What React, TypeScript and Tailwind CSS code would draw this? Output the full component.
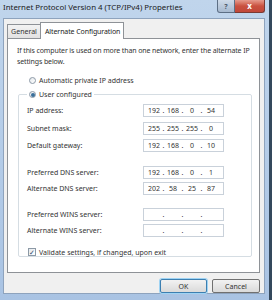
import React from 'react';

const font = { fontFamily: '"Noto Sans", "Open Sans", sans-serif' };

function IpBox({ value }: { value: string[] }) {
  return (
    <div className="w-[81px] h-[13px] border border-[#c9d1da] bg-white flex items-center pl-[2px] text-[7px] text-[#333]">
      {[0, 1, 2, 3].map(i => (
        <React.Fragment key={i}>
          <span className="w-[16px] text-center leading-none">{value[i] ?? ''}</span>
          {i < 3 && <span className="w-[3px] text-center leading-none">.</span>}
        </React.Fragment>
      ))}
    </div>
  );
}

function Row({ label, value, className = '' }: { label: string; value: string[]; className?: string }) {
  return (
    <div className={`flex items-center h-[13px] ${className}`}>
      <span className="w-[124px] pl-[8px] text-[7px] text-[#333] leading-none">{label}</span>
      <IpBox value={value} />
    </div>
  );
}

function Radio({ checked }: { checked?: boolean }) {
  return (
    <span className="w-[7px] h-[7px] rounded-full border border-[#8c99a6] bg-gradient-to-br from-[#e4e8ec] to-white flex items-center justify-center">
      {checked && <span className="w-[4px] h-[4px] rounded-full bg-[#3a6f9a]" />}
    </span>
  );
}

export default function App() {
  return (
    <div className="w-[272px] h-[300px] bg-[#34485c] overflow-hidden" style={font}>
      <div className="w-[269px] h-[300px] flex flex-col bg-gradient-to-b from-[#c0d5ec] via-[#b4cce8] to-[#a9c3e3]">
        {/* Title bar */}
        <div className="h-[18px] flex items-start">
          <span className="pl-[3px] pt-[4px] text-[7.9px] text-[#1a1a1a] leading-none">
            Internet Protocol Version 4 (TCP/IPv4) Properties
          </span>
          <div className="ml-auto mr-[4px] flex">
            <div className="w-[18px] h-[13px] rounded-bl-[3px] border border-t-0 border-[#5d6f85] bg-gradient-to-b from-[#cfdbe9] to-[#a7b9cf] flex items-center justify-center text-[7px] font-bold text-[#4a5868] leading-none">?</div>
            <div className="w-[30px] h-[13px] rounded-br-[3px] border border-t-0 border-l-0 border-[#7a3a33] bg-gradient-to-b from-[#e59a8d] via-[#c9503f] to-[#c1483a] flex items-center justify-center text-[8px] font-bold text-white leading-none">x</div>
          </div>
        </div>

        {/* Body */}
        <div className="ml-[3px] mr-[4px] mb-[6px] flex-1 bg-[#f0f0f0] border border-[#8ea3bd] flex flex-col pl-[3px] pt-[2px]">
          {/* Tabs */}
          <div className="flex items-end h-[17px]">
            <div className="h-[14px] w-[34px] border border-b-0 border-[#8e9297] bg-gradient-to-b from-[#f3f3f3] to-[#e2e2e2] flex items-center justify-center text-[7px] text-[#333] leading-none">General</div>
            <div className="h-[17px] w-[84px] -ml-[1px] border border-b-0 border-[#8e9297] bg-white flex items-center pl-[4px] text-[7px] text-[#222] leading-none whitespace-nowrap tracking-[-0.1px] relative -mb-[1px] z-10">Alternate Configuration</div>
          </div>

          {/* Panel */}
          <div className="w-[253px] h-[235px] bg-white border border-[#8e9297] flex flex-col">
            <p className="pl-[9px] pt-[6px] pr-0 text-[7px] leading-[11px] text-[#333] tracking-[-0.12px]">
              If this computer is used on more than one network, enter the alternate IP settings below.
            </p>
            <div className="flex items-center gap-[3px] pl-[21px] mt-[10px] text-[7px] text-[#333] leading-none">
              <Radio />
              <span>Automatic private IP address</span>
            </div>

            <fieldset className="ml-[10px] w-[234px] h-[166px] mt-[7px] border border-[#d5dde3] rounded-[2px] px-0 pt-[6px]">
              <legend className="ml-[8px] px-[2px] flex items-center gap-[3px] text-[7px] text-[#333] leading-none">
                <Radio checked />
                <span>User configured</span>
              </legend>
              <Row label="IP address:" value={['192', '168', '0', '54']} />
              <Row label="Subnet mask:" value={['255', '255', '255', '0']} className="mt-[5px]" />
              <Row label="Default gateway:" value={['192', '168', '0', '10']} className="mt-[4px]" />
              <Row label="Preferred DNS server:" value={['192', '168', '0', '1']} className="mt-[14px]" />
              <Row label="Alternate DNS server:" value={['202', '58', '25', '87']} className="mt-[3px]" />
              <Row label="Preferred WINS server:" value={[]} className="mt-[13px]" />
              <Row label="Alternate WINS server:" value={[]} className="mt-[3px]" />
              <div className="flex items-center gap-[3px] pl-[9px] mt-[11px] text-[7px] text-[#333] leading-none">
                <span className="w-[8px] h-[8px] border border-[#8c99a6] bg-gradient-to-br from-[#e4e8ec] to-white flex items-center justify-center text-[7px] text-[#2b4a6b] leading-none">✓</span>
                <span>Validate settings, if changed, upon exit</span>
              </div>
            </fieldset>
          </div>

          {/* Buttons */}
          <div className="flex gap-[5px] mt-[6px] pl-[153px]">
            <button className="w-[47px] h-[14px] rounded-[2px] border border-[#3c7fb1] shadow-[0_0_0_1px_#9fd3f3] bg-gradient-to-b from-[#f2f2f2] to-[#dadada] text-[7px] text-[#333] leading-none">OK</button>
            <button className="w-[48px] h-[14px] rounded-[2px] border border-[#707070] bg-gradient-to-b from-[#f2f2f2] to-[#dadada] text-[7px] text-[#333] leading-none">Cancel</button>
          </div>
        </div>
      </div>
    </div>
  );
}
